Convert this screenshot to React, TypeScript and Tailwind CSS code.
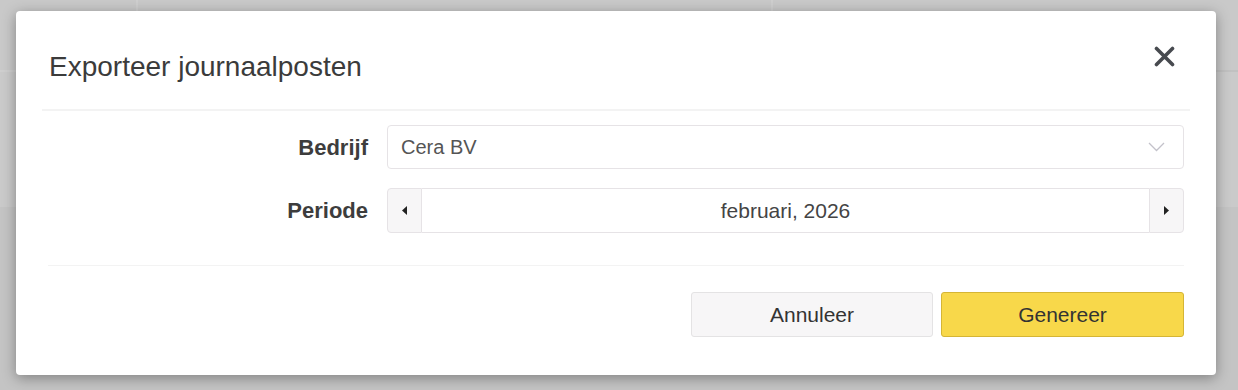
import { useState } from 'react';

const font = "font-['Liberation_Sans',Helvetica,Arial,sans-serif]";

export default function App() {
  const [company] = useState('Cera BV');
  const [period] = useState('februari, 2026');

  return (
    <div className={`relative h-[390px] w-full overflow-hidden bg-[#c6c6c6] ${font}`}>
      {/* page behind the overlay */}
      <div className="grid h-full grid-cols-[138px_635px_1fr] grid-rows-[72px_135px_1fr]">
        <div className="border-r-2 border-b-2 border-[#cfcfcf] bg-[#c9c9c9]" />
        <div className="border-r-2 border-b-2 border-[#cfcfcf] bg-[#c9c9c9]" />
        <div className="border-b-2 border-[#c1c1c1] bg-[#c9c9c9]" />
        <div className="col-span-3 bg-[#cacaca]" />
        <div className="col-span-3 bg-[#c4c4c4]" />
      </div>

      {/* Modal */}
      <div className="absolute left-[16px] top-[11px] w-[1200px] rounded-[4px] bg-white pb-[38px] shadow-[0_3px_14px_rgba(0,0,0,0.35)]">
        {/* Header */}
        <div className="mx-[26px] flex items-start justify-between border-b-2 border-[#f3f3f3] pb-[26px] pt-[40px]">
          <h2 className="pl-[7px] text-[28px] leading-[32px] text-[#3b3b3b]">Exporteer journaalposten</h2>
          <button className="mr-[15px] mt-[-5px] text-[#474a4f]">
            <svg width="21" height="21" viewBox="0 0 21 21" fill="none">
              <path d="M2.5 2.5 L18.5 18.5 M18.5 2.5 L2.5 18.5" stroke="currentColor" strokeWidth="3.6" strokeLinecap="round" />
            </svg>
          </button>
        </div>

        {/* Form */}
        <div className="mx-[32px] flex flex-col gap-[19px] pt-[14px]">
          <div className="flex items-center gap-[19px]">
            <label className="w-[320px] text-right text-[22px] font-bold text-[#3d3d3d]">Bedrijf</label>
            <div className="flex h-[44px] flex-1 items-center justify-between rounded-[4px] border border-[#e6e3e6] bg-white pl-[13px] pr-[18px]">
              <span className="text-[20px] text-[#555]">{company}</span>
              <svg width="17" height="10" viewBox="0 0 17 10" fill="none">
                <path d="M1 1 L8.5 8.5 L16 1" stroke="#c3c2ca" strokeWidth="1.3" />
              </svg>
            </div>
          </div>

          <div className="flex items-center gap-[19px]">
            <label className="w-[320px] text-right text-[22px] font-bold text-[#3d3d3d]">Periode</label>
            <div className="flex h-[45px] flex-1">
              <button className="flex w-[35px] items-center justify-center rounded-l-[4px] border border-[#e6e3e6] bg-[#f7f6f7]">
                <svg width="5" height="9" viewBox="0 0 5 9">
                  <path d="M5 0 L0 4.5 L5 9 Z" fill="#222" />
                </svg>
              </button>
              <div className="flex flex-1 items-center justify-center border-y border-[#e6e3e6] bg-white text-[21px] text-[#444]">
                {period}
              </div>
              <button className="flex w-[35px] items-center justify-center rounded-r-[4px] border border-[#e6e3e6] bg-[#f7f6f7]">
                <svg width="5" height="9" viewBox="0 0 5 9">
                  <path d="M0 0 L5 4.5 L0 9 Z" fill="#222" />
                </svg>
              </button>
            </div>
          </div>
        </div>

        {/* Footer */}
        <div className="mx-[32px] mt-[32px] flex justify-end gap-[8px] border-t border-[#f3f3f3] pt-[26px]">
          <button className="h-[45px] w-[242px] rounded-[3px] border border-[#e4e3e4] bg-[#f7f6f7] text-[21px] text-[#333]">
            Annuleer
          </button>
          <button className="h-[45px] w-[243px] rounded-[3px] border border-[#d5b535] bg-[#f8d84a] text-[21px] text-[#333]">
            Genereer
          </button>
        </div>
      </div>
    </div>
  );
}
